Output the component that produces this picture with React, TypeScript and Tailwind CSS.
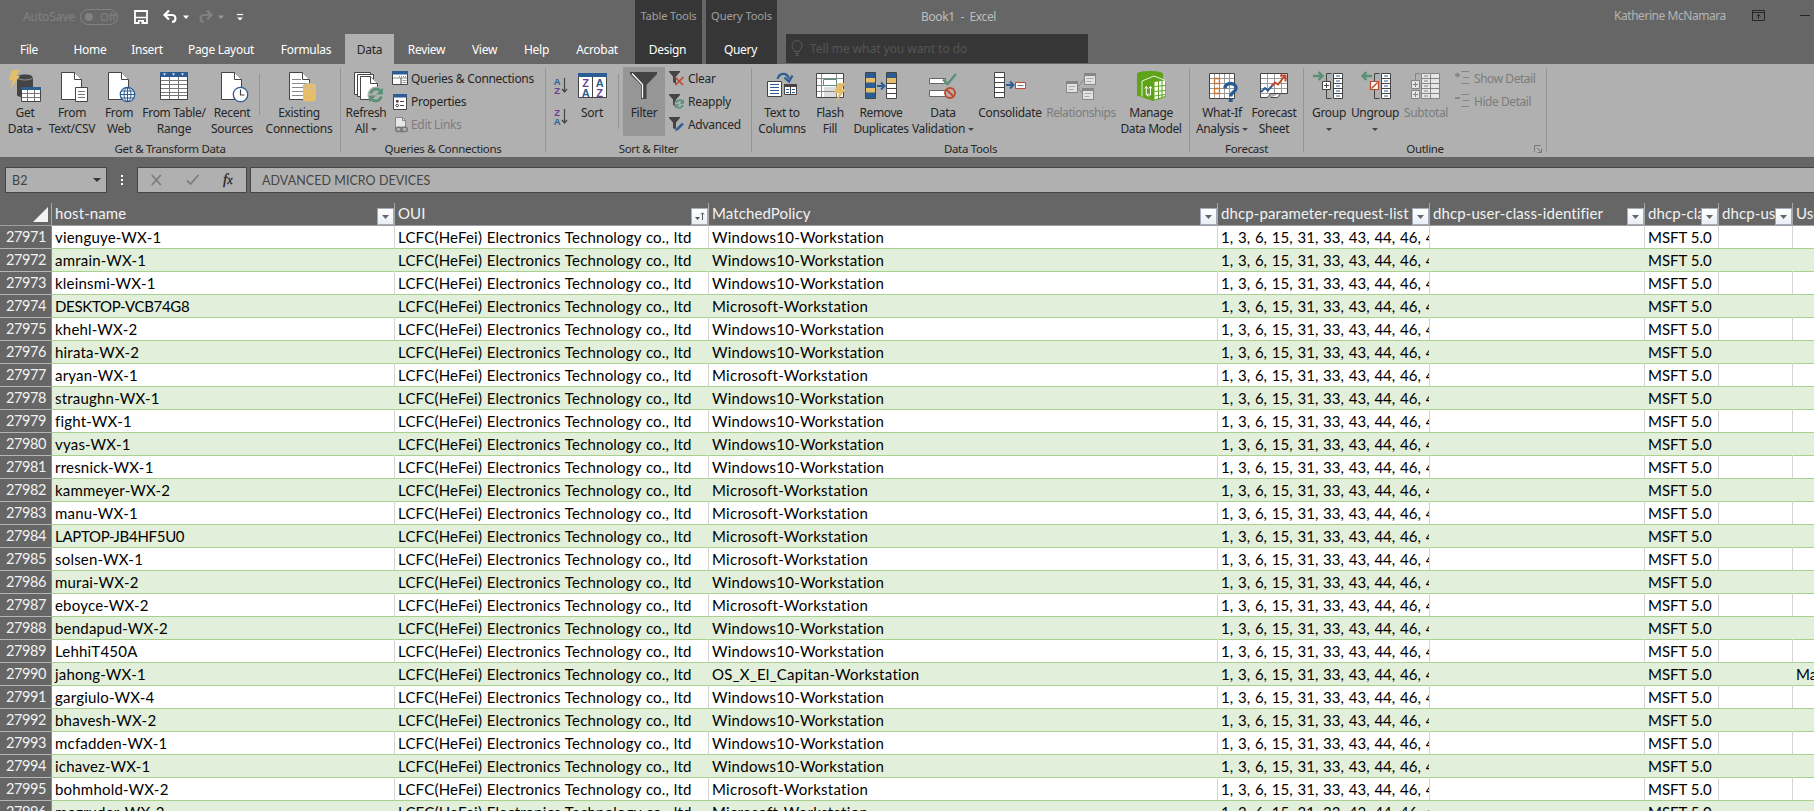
import React from "react";
import type { ReactNode } from "react";

const INK = "#444444";
const BLUE = "#2b5c93";
const GREEN = "#589078";
const GOLD = "#e6bd69";
const RED = "#c0492c";
const DIM = "#858585";

/* ---------- Icons (drawn on the ribbon's own pixel grid) ---------- */

function Big({ c, children }: { c: number; children: ReactNode }) {
  return (
    <svg className="block h-[41px] w-[44px] shrink-0 overflow-visible" viewBox={`${c - 22} 64 44 41`} fill="none">
      {children}
    </svg>
  );
}

function Page({ x, y, w = 20, h = 27 }: { x: number; y: number; w?: number; h?: number }) {
  return (
    <g fill="#fff" stroke={INK}>
      <path d={`M${x} ${y}h${w - 7}l7 7v${h - 7}h-${w}z`} />
      <path d={`M${x + w - 7} ${y}v7h7`} />
    </g>
  );
}

const GetDataIcon = () => (
  <Big c={25}>
    <path d="M17 78v17c0 3 16 3 16 0V78z" fill={INK} />
    <ellipse cx="25" cy="77" rx="8" ry="3" fill={INK} stroke="#a8a8a8" strokeWidth=".8" />
    <path d="M12 70h8l-4 6h4l-10 13 3-9H9z" fill={GOLD} />
    <path d="M21.500 87.500h19v14h-19z" fill="#fff" stroke={INK} />
    <path d="M21 87h20v3H21z" fill={BLUE} />
    <path d="M22 93.500h18M22 97.500h18M27.500 90v11M34.500 90v11" stroke="#777" />
  </Big>
);

const TextCsvIcon = () => (
  <Big c={72}>
    <Page x={61.500} y={72.500} />
    <path d="M75.500 87.500h12v14h-12z" fill="#fff" stroke={INK} />
    <path d="M78 91.500h7M78 94.500h7M78 97.500h7" stroke="#777" />
  </Big>
);

const WebIcon = () => (
  <Big c={119}>
    <Page x={108.500} y={72.500} />
    <circle cx="127.500" cy="94.500" r="7.200" fill="#fff" stroke={BLUE} strokeWidth="1.300" />
    <path d="M120.500 94.500h14M121.500 91h12M121.500 98h12M127.500 87.500v14" stroke={BLUE} />
    <ellipse cx="127.500" cy="94.500" rx="3.500" ry="7" stroke={BLUE} />
  </Big>
);

const TableIcon = () => (
  <Big c={174}>
    <path d="M160.500 72.500h27v27h-27z" fill="#fff" stroke={INK} />
    <path d="M160 72h28v5h-28z" fill={BLUE} />
    <path d="M163 73.500h3l-1.500 2zM172 73.500h3l-1.500 2zM181 73.500h3l-1.500 2z" fill="#fff" />
    <path d="M161 80.500h26M161 84.500h26M161 88.500h26M161 92.500h26M161 95.500h26M169.500 77v22M178.500 77v22" stroke="#777" />
  </Big>
);

const RecentIcon = () => (
  <Big c={232}>
    <Page x={221.500} y={72.500} />
    <circle cx="240.500" cy="94.500" r="7.200" fill="#fff" stroke={BLUE} strokeWidth="1.300" />
    <path d="M240.500 89.500v5.500h4" stroke={INK} strokeWidth="1.200" />
  </Big>
);

const ExistingIcon = () => (
  <Big c={299}>
    <Page x={289.500} y={72.500} />
    <path d="M292 79.500h9M292 83.500h15M292 87.500h12M292 91.500h12M292 95.500h12" stroke="#888" />
    <path d="M303 86v13.500c0 3 13 3 13 0V86z" fill={GOLD} />
    <ellipse cx="309.500" cy="86" rx="6.500" ry="2.500" fill={GOLD} stroke="#c4c0b4" />
  </Big>
);

function Cycle({ x, y, s = 1 }: { x: number; y: number; s?: number }) {
  return (
    <g transform={`translate(${x} ${y}) scale(${s})`}>
      <path d="M-5 -1.500A5.300 5.300 0 0 1 4 -4M5 1.500A5.300 5.300 0 0 1 -4 4" stroke={GREEN} strokeWidth="2.600" fill="none" />
      <path d="M6.500 -7v6.500H0zM-6.500 7V.5H0z" fill={GREEN} />
    </g>
  );
}

const RefreshIcon = () => (
  <Big c={366}>
    <path d="M354.500 72.500h16v22h-16z" fill="#fff" stroke={INK} />
    <path d="M357.500 74.500h16v22h-16z" fill="#fff" stroke={INK} />
    <Page x={360.500} y={76.500} w={17} h={23} />
    <circle cx="376" cy="95" r="8.500" fill="#b0b0b0" />
    <Cycle x={376} y={95} s={1.05} />
  </Big>
);

const SortIcon = () => (
  <Big c={592}>
    <path d="M578.500 73.500h28v24h-28z" fill="#fff" stroke={INK} />
    <path d="M578 73h29v4h-29z" fill={BLUE} />
    <path d="M592.500 77v20" stroke={INK} />
    <g fontFamily="Liberation Sans" fontWeight="700" fontSize="11" textAnchor="middle">
      <text x="585.500" y="86.500" fill="#6d3f92">Z</text>
      <text x="585.500" y="96.500" fill={BLUE}>A</text>
      <text x="599.500" y="86.500" fill={BLUE}>A</text>
      <text x="599.500" y="96.500" fill="#6d3f92">Z</text>
    </g>
  </Big>
);

const FilterIcon = () => (
  <Big c={644}>
    <path d="M630 72h27v2L646.500 85v14h-5.500V85L630 74z" fill={INK} />
    <path d="M632 73.500L642.500 84.500V98" stroke="#fff" strokeWidth="1.300" />
  </Big>
);

const TextColumnsIcon = () => (
  <Big c={782}>
    <path d="M777.500 79c2-6.500 9-7 11.500-.5" stroke={BLUE} strokeWidth="2.200" />
    <path d="M784.500 77.500l4.500 4 3.500-6" stroke={BLUE} strokeWidth="2.200" />
    <path d="M767.500 81.500h14v15h-14z" fill="#fff" stroke={INK} />
    <path d="M770 84.500h9M770 87.500h9M770 90.500h9M770 93.500h9" stroke={BLUE} />
    <path d="M784.500 84.500h12v10h-12z" fill="#fff" stroke={INK} />
    <path d="M784 84h13v3h-13z" fill={INK} />
    <path d="M790.500 86v8" stroke={INK} />
    <path d="M786 89.500h3M786 92.500h3M792 89.500h3M792 92.500h3" stroke={BLUE} />
  </Big>
);

const FlashFillIcon = () => (
  <Big c={830}>
    <path d="M816.500 73.500h27v24h-27z" fill="#fff" stroke={INK} />
    <path d="M824 87h12v10h-12z" fill="#ddd" />
    <path d="M817 78.500h26M817 85.500h26M817 91.500h26M821.500 74v23M836.500 74v23" stroke="#888" />
    <path d="M823.500 79.500h13v6h-13z" fill="#fff" stroke={GREEN} />
    <path d="M838 83h7l-3 6h4l-10 13 3-9h-5z" fill={GOLD} />
  </Big>
);

const RemoveDupIcon = () => (
  <Big c={881}>
    <path d="M865.500 72.500h10v26h-10z" fill={BLUE} stroke={INK} />
    <path d="M866 78h9v4.500h-9zM866 88h9v4.500h-9z" fill={GOLD} />
    <path d="M877 86h6M881 82.500l3.500 3.500-3.500 3.500" stroke={BLUE} strokeWidth="1.800" />
    <path d="M886.500 72.500h10v26h-10z" fill="#fff" stroke={INK} />
    <path d="M887 73h9v5h-9z" fill={BLUE} />
    <path d="M887 78h9v5h-9z" fill={GOLD} />
    <path d="M886 83.500h10M886 88.500h10M886 93.500h10" stroke={INK} />
  </Big>
);

const ValidationIcon = () => (
  <Big c={943}>
    <path d="M929.500 78.500h16v5h-16zM929.500 90.500h16v6h-16z" fill="#fff" stroke="#666" />
    <path d="M943 79.500l4.500 4.500 8.500-10" stroke={GREEN} strokeWidth="2.400" />
    <circle cx="950" cy="93" r="5" fill="#b9b0ae" stroke={RED} strokeWidth="1.900" />
    <path d="M946.500 89.500l7 7" stroke={RED} strokeWidth="1.900" />
  </Big>
);

const ConsolidateIcon = () => (
  <Big c={1010}>
    <path d="M994.500 72.500h10v25h-10z" fill="#fff" stroke={INK} />
    <path d="M995 77.500h9M995 82.500h9M995 87.500h9M995 92.500h9" stroke={INK} />
    <path d="M1006 85h6M1010 81.500l3.500 3.500-3.500 3.500" stroke={BLUE} strokeWidth="1.800" />
    <path d="M1015.500 82.500h10v6h-10z" fill="#fff" stroke={RED} />
    <path d="M1017.500 85.500h6" stroke="#777" />
  </Big>
);

const RelationshipsIcon = () => (
  <Big c={1081}>
    <path d="M1078 87l6-8M1078 88l5 6" stroke={DIM} />
    <g fill="#e2e2e2" stroke={DIM}>
      <path d="M1066.500 81.500h11v11h-11zM1084.500 73.500h11v11h-11zM1082.500 88.500h11v11h-11z" />
    </g>
    <path d="M1066 81h12v3h-12zM1084 73h12v3h-12zM1082 88h12v3h-12z" fill={DIM} />
    <path d="M1068.500 86.500h7M1068.500 89.500h5M1086.500 78.500h7M1086.500 81.500h5M1084.500 93.500h7M1084.500 96.500h5" stroke="#aaa" />
  </Big>
);

const ModelIcon = () => (
  <Big c={1151}>
    <path d="M1137 73.500c3-3.200 23-3.200 26 0V79l2.500 2v16l-12.500 4-16-5.500z" fill="#5fa318" />
    <path d="M1142 96.500V81l12-5 11.500 4.500" stroke="#e7f3da" />
    <path d="M1154.500 82l10.500-1.500v15.500l-10.500 3.500z" fill="#fff" />
    <path d="M1158.500 81v19M1162 81v17M1154.500 86.500l11-1M1154.500 91.500l11-1M1154.500 96l11-1.500" stroke="#5fa318" />
    <path d="M1146.300 86.500v8.500h4.200v-8.500M1144.800 88.500l1.500-2 1.500 2M1148.800 88.500l1.700-2 1.500 2M1148.500 93.500l-1.500 1.500 1.500 1.500" stroke="#fff" />
  </Big>
);

const WhatIfIcon = () => (
  <Big c={1222}>
    <path d="M1209.500 73.500h25v25h-25z" fill="#fff" stroke={INK} />
    <path d="M1210 78.500h24M1210 83.500h24M1210 88.500h24M1210 93.500h24M1214.500 74v24M1219.500 74v24M1224.500 74v24M1229.500 74v24" stroke="#999" />
    <path d="M1214.500 78.500h5v5h-5zM1214.500 88.500h5v5h-5z" fill="#fff" stroke="#cc7331" strokeWidth="1.300" />
    <path d="M1225 88.500c0-7 11.500-6.500 11 0-.5 4.300-5.300 3-5.300 8" stroke={BLUE} strokeWidth="3.400" />
    <path d="M1228.700 98.500h4v3.500h-4z" fill={BLUE} />
  </Big>
);

const ForecastIcon = () => (
  <Big c={1274}>
    <path d="M1260.500 73.500h27v20h-27z" fill="#fff" stroke={INK} />
    <path d="M1261 78.500h26M1261 83.500h26M1261 88.500h26M1267.500 74v19M1274.500 74v19M1281.500 74v19" stroke="#999" />
    <path d="M1260.500 93.500v4h7l3-4M1270.500 97.500h7l3-4" stroke={INK} fill="#fff" />
    <path d="M1261 92l4-4 3 2.500 5-6" stroke={BLUE} strokeWidth="2" />
    <path d="M1272 86l3-3.500 3 2 7-9M1280 75.500h5.500v6" stroke={RED} strokeWidth="2" />
  </Big>
);

const GroupIcon = () => (
  <Big c={1329}>
    <path d="M1313 76h9M1318.500 72l4 4-4 4" stroke={GREEN} strokeWidth="2.400" />
    <path d="M1331.500 73.500h-5V81M1326.500 90v8.500h5" stroke={INK} />
    <path d="M1322.500 81.500h8v8h-8z" fill="#fff" stroke={INK} />
    <path d="M1324 85.500h5M1326.500 83v5" stroke={INK} />
    <path d="M1333.500 73.500h9v25h-9z" fill="#fff" stroke={INK} />
    <path d="M1334 78.500h8M1334 83.500h8M1334 88.500h8M1334 93.500h8" stroke={INK} />
    <path d="M1336 76h4M1336 81h4M1336 86h4M1336 91h4M1336 96h4" stroke={BLUE} />
  </Big>
);

const UngroupIcon = () => (
  <Big c={1375}>
    <path d="M1372 76h-9M1366.500 72l-4 4 4 4" stroke={GREEN} strokeWidth="2.400" />
    <path d="M1379.500 73.500h-5V81M1374.500 90v8.500h5" stroke={INK} />
    <path d="M1370.500 81.500h8v8h-8z" fill="#fff" stroke={RED} strokeWidth="1.200" />
    <path d="M1371.500 88.500l6-6" stroke={RED} strokeWidth="1.500" />
    <path d="M1381.500 73.500h9v25h-9z" fill="#fff" stroke={INK} />
    <path d="M1382 78.500h8M1382 83.500h8M1382 88.500h8M1382 93.500h8" stroke={INK} />
    <path d="M1384 76h4M1384 81h4M1384 86h4M1384 91h4M1384 96h4" stroke={BLUE} />
  </Big>
);

const SubtotalIcon = () => (
  <Big c={1426}>
    <path d="M1420.500 73.500h-5V80" stroke={DIM} />
    <path d="M1411.500 80.500h8v8h-8zM1411.500 90.500h8v8h-8z" fill="#e6e6e6" stroke={DIM} />
    <path d="M1413 84.500h5M1415.500 82v5M1413 94.500h5M1415.500 92v5" stroke={DIM} />
    <path d="M1421.500 73.500h18v25h-18z" fill="#e6e6e6" stroke={DIM} />
    <path d="M1422 78.500h17M1422 83.500h17M1422 88.500h17M1422 93.500h17M1430.500 74v24" stroke={DIM} />
    <path d="M1424 76h4M1424 81h4M1424 86h4M1424 91h4M1424 96h4" stroke={DIM} />
  </Big>
);

function Small({ children }: { children: ReactNode }) {
  return (
    <svg className="block h-[16px] w-[16px] shrink-0 overflow-visible" viewBox="0 0 16 16" fill="none">
      {children}
    </svg>
  );
}

const QueriesIcon = () => (
  <Small>
    <path d="M.5.5h15v13H.5z" fill="#fff" stroke={INK} />
    <path d="M0 0h16v3.500H0z" fill={BLUE} />
    <path d="M1 7h14" stroke="#888" />
    <path d="M7 5.500h7" stroke="#888" strokeDasharray="1 1" />
    <path d="M9 7v6" stroke={INK} />
    <path d="M10.500 9.500h4M10.500 11.500h4" stroke="#999" />
  </Small>
);

const PropertiesIcon = () => (
  <Small>
    <path d="M1.500.5h13v15h-13z" fill="#fff" stroke={INK} />
    <path d="M1 0h14v3.500H1z" fill={BLUE} />
    <path d="M4 6h2.500v2.500H4z" fill={INK} />
    <path d="M8 7.500h4M8 11.500h4" stroke={INK} />
    <circle cx="5.200" cy="11.500" r="1.300" stroke={INK} />
  </Small>
);

const EditLinksIcon = () => (
  <Small>
    <path d="M3.500.5h7l3 3v10h-10z" fill="#e6e6e6" stroke={DIM} />
    <path d="M10.500.5v3h3" stroke={DIM} />
    <path d="M4 10h11v6H4z" fill="#b0b0b0" />
    <rect x="3.800" y="10.300" width="6.500" height="4.200" rx="2.100" stroke="#777" strokeWidth="1.400" />
    <rect x="8.800" y="10.300" width="6.500" height="4.200" rx="2.100" stroke="#777" strokeWidth="1.400" />
  </Small>
);

const funnel = "M0 0h11v1L7 5.500V13l-3-2V5.500L0 1z";

const ClearIcon = () => (
  <Small>
    <path d={funnel} fill={INK} />
    <path d="M6 6l8 8M14.500 6L6.500 14" stroke={RED} strokeWidth="1.700" />
  </Small>
);

const ReapplyIcon = () => (
  <Small>
    <path d={funnel} fill={INK} />
    <circle cx="10.500" cy="10" r="5" fill="#b0b0b0" />
    <Cycle x={10.500} y={10} s={0.68} />
  </Small>
);

const AdvancedIcon = () => (
  <Small>
    <path d={funnel} fill={INK} />
    <path d="M6 14.500l1-3 6-6 2 2-6 6z" fill={BLUE} stroke="#b0b0b0" strokeWidth=".5" />
  </Small>
);

const ShowDetailIcon = ({ plus }: { plus: boolean }) => (
  <Small>
    <path d={plus ? "M0 4h5M2.500 1.500v5" : "M0 4h5"} stroke={DIM} strokeWidth="1.800" />
    <path d="M6 .5h8M8 6.500h6M6 12.500h8" stroke={DIM} />
  </Small>
);

function SortLetters({ top, bottom }: { top: "A" | "Z"; bottom: "A" | "Z" }) {
  const tone = (l: string) => (l === "A" ? BLUE : "#6d3f92");
  return (
    <svg className="block h-[18px] w-[16px]" viewBox="0 0 16 18" fill="none">
      <g fontFamily="Liberation Sans" fontWeight="700" fontSize="9.500" textAnchor="middle">
        <text x="4" y="8" fill={tone(top)}>{top}</text>
        <text x="4" y="16.500" fill={tone(bottom)}>{bottom}</text>
      </g>
      <path d="M11.500 1v14M9 12l2.500 3 2.500-3" stroke={INK} strokeWidth="1.200" />
    </svg>
  );
}

/* ---------- Ribbon pieces ---------- */

function Caret() {
  return <span className="inline-block h-0 w-0 border-x-[3px] border-t-[3px] border-x-transparent border-t-[#444444]" />;
}

interface ToolProps {
  w: string;
  icon: ReactNode;
  lines: string[];
  caret?: boolean;
  dim?: boolean;
  active?: boolean;
}

function Tool({ w, icon, lines, caret, dim, active }: ToolProps) {
  return (
    <div className={`flex shrink-0 flex-col items-center ${w} ${dim ? "text-[#7c7c7c]" : "text-[#262626]"}`}>
      <div
        className={`flex flex-col items-center ${active ? "h-[72px] w-[42px] bg-[#969696] bg-clip-content pt-[3px] [&>svg]:-mt-[3px]" : ""}`}
      >
        {icon}
        <div className="flex flex-col items-center whitespace-nowrap leading-[16px]">
          {lines.map((line, i) => (
            <span key={line} className="flex h-[16px] items-center gap-[3px]">
              {line}
              {caret && i === lines.length - 1 && lines.length > 1 && <Caret />}
            </span>
          ))}
          {caret && lines.length === 1 && (
            <span className="flex h-[16px] items-center">
              <Caret />
            </span>
          )}
        </div>
      </div>
    </div>
  );
}

function Row({ icon, label, dim }: { icon: ReactNode; label: string; dim?: boolean }) {
  return (
    <div className={`flex h-[23px] items-center gap-[3px] whitespace-nowrap ${dim ? "text-[#7c7c7c]" : "text-[#262626]"}`}>
      {icon}
      <span className="pt-px">{label}</span>
    </div>
  );
}

function Group({ w, label, pad, children, launcher }: { w: string; label: string; pad: string; children: ReactNode; launcher?: boolean }) {
  return (
    <section className={`flex h-[93px] shrink-0 ${w}`}>
      <div className="flex min-w-0 flex-1 flex-col">
        <div className={`flex h-[76px] ${pad}`}>{children}</div>
        <div className="relative flex h-[17px] items-center justify-center text-[11.5px] tracking-[-0.33px] text-[#262626]">
          {label}
          {launcher && (
            <svg className="absolute right-[4px] top-[5px] h-[8px] w-[8px]" viewBox="0 0 8 8" fill="none">
              <path d="M.5 6.500v-6h6M3 3l4 4M7.500 3.500v4h-4" stroke="#777" />
            </svg>
          )}
        </div>
      </div>
      <div className="mt-[4px] h-[84px] w-px bg-[#949494]" />
    </section>
  );
}

/* ---------- Sheet data ---------- */

const W10 = "Windows10-Workstation";
const MS = "Microsoft-Workstation";

const rows: [string, string][] = [
  ["vienguye-WX-1", W10],
  ["amrain-WX-1", W10],
  ["kleinsmi-WX-1", W10],
  ["DESKTOP-VCB74G8", MS],
  ["khehl-WX-2", W10],
  ["hirata-WX-2", W10],
  ["aryan-WX-1", MS],
  ["straughn-WX-1", W10],
  ["fight-WX-1", W10],
  ["vyas-WX-1", W10],
  ["rresnick-WX-1", W10],
  ["kammeyer-WX-2", MS],
  ["manu-WX-1", MS],
  ["LAPTOP-JB4HF5U0", MS],
  ["solsen-WX-1", MS],
  ["murai-WX-2", W10],
  ["eboyce-WX-2", MS],
  ["bendapud-WX-2", W10],
  ["LehhiT450A", W10],
  ["jahong-WX-1", "OS_X_El_Capitan-Workstation"],
  ["gargiulo-WX-4", W10],
  ["bhavesh-WX-2", W10],
  ["mcfadden-WX-1", W10],
  ["ichavez-WX-1", W10],
  ["bohmhold-WX-2", MS],
  ["mcgruder-WX-2", MS],
];

const GRID = "grid grid-cols-[52px_343px_314px_509px_212px_215px_74px_74px_60px]";

function FilterButton({ sorted }: { sorted?: boolean }) {
  return (
    <span className="absolute bottom-0 right-0 flex h-[17px] w-[17px] items-center justify-center border border-[#a3abb8] bg-gradient-to-b from-white to-[#eaeff6]">
      <svg className="h-[15px] w-[15px]" viewBox="0 0 15 15" fill="none">
        {sorted ? (
          <>
            <path d="M3 8h5l-2.500 3z" fill="#555" />
            <path d="M10.500 11V4M9 5.500l1.500-1.700L12 5.500" stroke="#555" />
          </>
        ) : (
          <path d="M4 6h7l-3.500 4z" fill="#666" />
        )}
      </svg>
    </span>
  );
}

function HeadCell({ label, sorted, plain }: { label: string; sorted?: boolean; plain?: boolean }) {
  return (
    <div className={`relative overflow-hidden whitespace-nowrap pl-[3px] leading-[20px] tracking-[0.1px] ${plain ? "" : "border-r border-[#a9a9a9]"}`}>
      {label}
      {!plain && <FilterButton sorted={sorted} />}
    </div>
  );
}

const tabs: [string, string][] = [
  ["File", "w-[58px]"],
  ["Home", "ml-[3px] w-[58px]"],
  ["Insert", "w-[56px]"],
  ["Page Layout", "w-[92px]"],
  ["Formulas", "w-[78px]"],
  ["Data", "w-[49px] bg-[#b0b0b0] text-[#262626]"],
  ["Review", "w-[65px]"],
  ["View", "w-[51px]"],
  ["Help", "w-[53px]"],
  ["Acrobat", "w-[68px]"],
];

export default function App() {
  return (
    <div className="flex h-[811px] w-[1814px] flex-col overflow-hidden bg-[#666666] font-['Noto_Sans',sans-serif] text-[12px] tracking-[-0.3px]">
      {/* Title bar and tabs */}
      <header className="flex h-[64px] shrink-0">
        <div className="flex w-[635px] flex-col">
          <div className="flex h-[33px] items-center pl-[23px] text-[#828282]">
            <span className="w-[57px] pt-px tracking-[-0.1px]">AutoSave</span>
            <span className="flex h-[16px] w-[38px] items-center gap-[7px] rounded-full border border-[#828282] pl-[4px] text-[11.5px] leading-[14px]">
              <span className="h-[8px] w-[8px] rounded-full bg-[#828282]" />
              Off
            </span>
            <svg className="ml-[16px] h-[14px] w-[14px]" viewBox="0 0 14 14" fill="none">
              <path d="M1 1h12v12H1z" stroke="#fff" strokeWidth="1.800" />
              <path d="M1 7.500h12" stroke="#fff" strokeWidth="1.500" />
              <path d="M4 10h6v4H4z" fill="#fff" />
              <path d="M5.500 11.500h2V14h-2z" fill="#666" />
            </svg>
            <svg className="ml-[14px] h-[16px] w-[82px]" viewBox="0 0 82 16" fill="none">
              <path d="M2.500 6h8c4 0 4 7-.5 7M7 1.500L2.500 6 7 10.500" stroke="#fff" strokeWidth="2.200" />
              <path d="M21 6.500h6l-3 3.500z" fill="#fff" />
              <path d="M49.500 6h-8c-4 0-4 7 .5 7M45 1.500L49.500 6 45 10.500" stroke="#828282" strokeWidth="2.200" />
              <path d="M56 6.500h6l-3 3.500z" fill="#999" />
              <path d="M75 5.500h6" stroke="#fff" strokeWidth="1.200" />
              <path d="M75 8.500h6l-3 3z" fill="#fff" />
            </svg>
          </div>
          <nav className="mt-px flex h-[30px] text-white">
            {tabs.map(([label, cls]) => (
              <div key={label} className={`flex items-center justify-center whitespace-nowrap pt-px ${cls}`}>
                {label}
              </div>
            ))}
          </nav>
        </div>
        <div className="flex w-[67px] flex-col items-center bg-[#363636] text-white">
          <span className="flex h-[33px] items-center whitespace-nowrap text-[11.2px] tracking-[-0.15px] text-[#a0a0a0]">Table Tools</span>
          <span className="flex h-[31px] items-center pr-[2px] pt-[2px]">Design</span>
        </div>
        <div className="ml-[4px] flex w-[71px] flex-col items-center bg-[#363636] text-white">
          <span className="flex h-[33px] items-center whitespace-nowrap text-[11.2px] tracking-[-0.15px] text-[#a0a0a0]">Query Tools</span>
          <span className="flex h-[31px] items-center pr-[2px] pt-[2px]">Query</span>
        </div>
        <div className="ml-[9px] flex w-[302px] flex-col">
          <div className="flex h-[34px] items-center pb-px pl-[135px] text-[#bdbdbd]">
            <span className="whitespace-pre tracking-[-0.35px]">Book1  -  Excel</span>
          </div>
          <div className="flex h-[29px] items-center gap-[7px] bg-[#363636] pl-[5px] text-[#555555]">
            <svg className="h-[17px] w-[12px]" viewBox="0 0 12 17" fill="none" stroke="#5a5a5a">
              <path d="M3.500 11.500c0-2-2.500-3-2.500-6a5 5 0 0 1 10 0c0 3-2.500 4-2.500 6zM4 13.500h4M4.500 15.500h3" />
            </svg>
            <span className="pt-px tracking-[-0.04px]">Tell me what you want to do</span>
          </div>
        </div>
        <div className="flex h-[31px] flex-1 items-center text-[#b4b4b4]">
          <span className="ml-[526px] w-[138px] whitespace-nowrap pt-px tracking-[-0.45px]">Katherine McNamara</span>
          <svg className="h-[11px] w-[13px]" viewBox="0 0 13 11" fill="none" stroke="#262626">
            <path d="M.5.5h12v10H.5zM0 2.500h13M6.500 9V4.500M4.500 6.500l2-2 2 2" />
          </svg>
          <span className="ml-[35px] h-px w-[10px] bg-[#262626]" />
        </div>
      </header>

      {/* Ribbon */}
      <div className="flex h-[93px] shrink-0 bg-[#b0b0b0]">
        <Group w="w-[341px]" label="Get & Transform Data" pad="pl-[4px]">
          <Tool w="w-[42px]" icon={<GetDataIcon />} lines={["Get", "Data"]} caret />
          <Tool w="w-[52px]" icon={<TextCsvIcon />} lines={["From", "Text/CSV"]} />
          <Tool w="w-[42px]" icon={<WebIcon />} lines={["From", "Web"]} />
          <Tool w="w-[68px]" icon={<TableIcon />} lines={["From Table/", "Range"]} />
          <Tool w="w-[48px]" icon={<RecentIcon />} lines={["Recent", "Sources"]} />
          <div className="ml-[3px] mt-[10px] h-[41px] w-px bg-[#949494]" />
          <Tool w="w-[78px]" icon={<ExistingIcon />} lines={["Existing", "Connections"]} />
        </Group>
        <Group w="w-[205px]" label="Queries & Connections" pad="pl-[2px]">
          <Tool w="w-[46px]" icon={<RefreshIcon />} lines={["Refresh", "All"]} caret />
          <div className="ml-[3px] flex flex-col pt-[3px]">
            <Row icon={<QueriesIcon />} label="Queries & Connections" />
            <Row icon={<PropertiesIcon />} label="Properties" />
            <Row icon={<EditLinksIcon />} label="Edit Links" dim />
          </div>
        </Group>
        <Group w="w-[206px]" label="Sort & Filter" pad="pl-[7px]">
          <div className="flex w-[17px] flex-col gap-[13px] pt-[13px]">
            <SortLetters top="A" bottom="Z" />
            <SortLetters top="Z" bottom="A" />
          </div>
          <Tool w="w-[44px]" icon={<SortIcon />} lines={["Sort"]} />
          <div className="ml-[4px] mt-[10px] h-[55px] w-px bg-[#949494]" />
          <Tool w="ml-[4px] w-[42px]" icon={<FilterIcon />} lines={["Filter"]} active />
          <div className="ml-[4px] flex flex-col pt-[3px]">
            <Row icon={<ClearIcon />} label="Clear" />
            <Row icon={<ReapplyIcon />} label="Reapply" />
            <Row icon={<AdvancedIcon />} label="Advanced" />
          </div>
        </Group>
        <Group w="w-[438px]" label="Data Tools" pad="pl-[4px]">
          <Tool w="w-[52px]" icon={<TextColumnsIcon />} lines={["Text to", "Columns"]} />
          <Tool w="w-[44px]" icon={<FlashFillIcon />} lines={["Flash", "Fill"]} />
          <Tool w="w-[58px] tracking-[-0.4px]" icon={<RemoveDupIcon />} lines={["Remove", "Duplicates"]} />
          <Tool w="w-[66px]" icon={<ValidationIcon />} lines={["Data", "Validation"]} caret />
          <Tool w="w-[68px]" icon={<ConsolidateIcon />} lines={["Consolidate"]} />
          <Tool w="w-[74px] tracking-[-0.45px]" icon={<RelationshipsIcon />} lines={["Relationships"]} dim />
          <Tool w="w-[66px] tracking-[-0.4px]" icon={<ModelIcon />} lines={["Manage", "Data Model"]} />
        </Group>
        <Group w="w-[114px]" label="Forecast" pad="pl-[5px]">
          <Tool w="w-[54px]" icon={<WhatIfIcon />} lines={["What-If", "Analysis"]} caret />
          <Tool w="w-[50px]" icon={<ForecastIcon />} lines={["Forecast", "Sheet"]} />
        </Group>
        <Group w="w-[243px]" label="Outline" pad="pl-[3px]" launcher>
          <Tool w="w-[44px]" icon={<GroupIcon />} lines={["Group"]} caret />
          <Tool w="w-[48px]" icon={<UngroupIcon />} lines={["Ungroup"]} caret />
          <Tool w="w-[54px] tracking-[-0.4px]" icon={<SubtotalIcon />} lines={["Subtotal"]} dim />
          <div className="ml-[2px] flex flex-col pt-[3px] tracking-[-0.45px]">
            <Row icon={<ShowDetailIcon plus />} label="Show Detail" dim />
            <Row icon={<ShowDetailIcon plus={false} />} label="Hide Detail" dim />
          </div>
        </Group>
      </div>

      {/* Formula bar */}
      <div className="flex h-[46px] shrink-0 pl-[5px] pt-[10px] font-[Lato,sans-serif] text-[12.5px] tracking-[0.05px] text-[#444444]">
        <div className="flex h-[26px] w-[102px] items-center justify-between border border-[#454545] bg-[#b0b0b0] pl-[6px] pr-[5px]">
          <span className="pt-[2px]">B2</span>
          <span className="h-0 w-0 border-x-4 border-t-4 border-x-transparent border-t-[#363636]" />
        </div>
        <div className="ml-[14px] flex w-[2px] flex-col gap-[2px] pt-[8px]">
          <span className="h-[2px] w-[2px] bg-white" />
          <span className="h-[2px] w-[2px] bg-white" />
          <span className="h-[2px] w-[2px] bg-white" />
        </div>
        <div className="ml-[14px] flex h-[26px] w-[110px] items-center border border-[#454545] bg-[#b0b0b0] pl-[13px]">
          <svg className="h-[12px] w-[50px]" viewBox="0 0 50 12" fill="none" stroke="#7d7d7d" strokeWidth="1.800">
            <path d="M.8 1l9 10M9.800 1l-9 10M36 6.500l3.500 3.500 8-9" />
          </svg>
          <span className="ml-[22px] pb-[2px] font-['Liberation_Serif',serif] text-[15px] italic leading-none text-[#262626] [-webkit-text-stroke:0.3px_#262626]">
            f<span className="text-[12px]">x</span>
          </span>
        </div>
        <div className="ml-[3px] flex h-[26px] flex-1 items-center border-y border-l border-[#454545] bg-[#b0b0b0] pl-[11px] pt-[2px]">
          ADVANCED MICRO DEVICES
        </div>
      </div>

      {/* Worksheet */}
      <main className="flex flex-col font-[Lato,sans-serif] text-[15px] tracking-normal [font-variant-ligatures:none]">
        <div className={`${GRID} h-[23px] border-b border-[#a0a0a0] text-[#f2f2f2]`}>
          <div className="flex items-end justify-end border-r border-[#a9a9a9] pb-[3px] pr-[3px]">
            <svg className="h-[15px] w-[15px]" viewBox="0 0 15 15">
              <path d="M15 0v15H0z" fill="#f2f2f2" />
            </svg>
          </div>
          <HeadCell label="host-name" />
          <HeadCell label="OUI" sorted />
          <HeadCell label="MatchedPolicy" />
          <HeadCell label="dhcp-parameter-request-list" />
          <HeadCell label="dhcp-user-class-identifier" />
          <HeadCell label="dhcp-class-identifier" />
          <HeadCell label="dhcp-user-class" />
          <HeadCell label="User" plain />
        </div>
        {rows.map(([host, policy], i) => {
          const band = i % 2 === 1;
          const cell = `h-[23px] overflow-hidden whitespace-nowrap border-b border-r border-b-[#a9d08e] pl-[3px] leading-[22px] ${
            band ? "border-r-[#e2efda] bg-[#e2efda]" : "border-r-[#d4d4d4] bg-white"
          }`;
          const hostSpacing = host === host.toUpperCase() ? "tracking-[-0.3px]" : "tracking-[0.2px]";
          return (
            <div key={host} className={`${GRID} h-[23px] shrink-0 text-black`}>
              <div className="h-[23px] border-b border-r border-b-[#b5b5b5] border-r-[#8a8a8a] pr-[5px] text-right text-[14.5px] leading-[22px] tracking-[-0.4px] text-[#f2f2f2]">
                {27971 + i}
              </div>
              <div className={`${cell} ${hostSpacing}`}>{host}</div>
              <div className={`${cell} tracking-[0.2px] [word-spacing:0.5px]`}>LCFC(HeFei) Electronics Technology co., ltd</div>
              <div className={`${cell} tracking-[0.27px]`}>{policy}</div>
              <div className={`${cell} [word-spacing:1px]`}>1, 3, 6, 15, 31, 33, 43, 44, 46, 47</div>
              <div className={cell} />
              <div className={cell}>MSFT 5.0</div>
              <div className={cell} />
              <div className={cell}>{i === 19 ? "Mac" : ""}</div>
            </div>
          );
        })}
      </main>
    </div>
  );
}
